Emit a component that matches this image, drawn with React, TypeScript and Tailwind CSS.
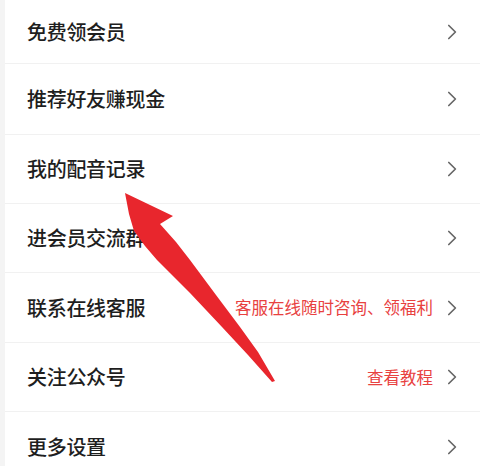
import React from "react";

const Chevron = () => (
  <svg width="10" height="16" viewBox="0 0 10 16" fill="none" className="shrink-0">
    <path d="M1.8 1.5 L8.4 8 L1.8 14.5" stroke="#666666" strokeWidth="1.7" strokeLinecap="round" strokeLinejoin="round" />
  </svg>
);

type Row = { label: string; hint?: string; h: string };

const rows: Row[] = [
  { label: "免费领会员", h: "h-[64px]" },
  { label: "推荐好友赚现金", h: "h-[71px]" },
  { label: "我的配音记录", h: "h-[69px]" },
  { label: "进会员交流群", h: "h-[69px]" },
  { label: "联系在线客服", hint: "客服在线随时咨询、领福利", h: "h-[70px]" },
  { label: "关注公众号", hint: "查看教程", h: "h-[69px]" },
  { label: "更多设置", h: "h-[70px]" },
];

export default function App() {
  return (
    <div
      className="relative w-[480px] h-[466px] overflow-hidden bg-[#f4f4f4] pl-[5px]"
      style={{ fontFamily: '"Noto Sans CJK SC", "Noto Sans", sans-serif' }}
    >
      <div className="flex flex-col bg-white h-full">
        {rows.map((r, i) => (
          <div
            key={r.label}
            className={`${r.h} shrink-0 flex items-center pl-[22px] pr-[23px] ${i < rows.length - 1 ? "border-b border-[#f1f1f1]" : ""}`}
          >
            <span className="text-[20px] leading-none font-medium text-[#1e1e1e] tracking-[-0.3px]">{r.label}</span>
            <div className="flex-1" />
            {r.hint && (
              <span className="text-[16.5px] leading-none text-[#e8413f] mr-[14px]">{r.hint}</span>
            )}
            <Chevron />
          </div>
        ))}
      </div>
      <svg
        className="absolute left-0 top-0 pointer-events-none"
        width="480"
        height="466"
        viewBox="0 0 480 466"
      >
        <path
          d="M125 193 L173 216 L160 224 L176 242 L190 260 L216 295 L240 327 L258 352 L275 381 L272 382 L248 355 L222 327 L190 293 L157 260 L145 246 L134 231 L129 214 Z"
          fill="#e8262d"
          strokeLinejoin="round"
        />
      </svg>
    </div>
  );
}
